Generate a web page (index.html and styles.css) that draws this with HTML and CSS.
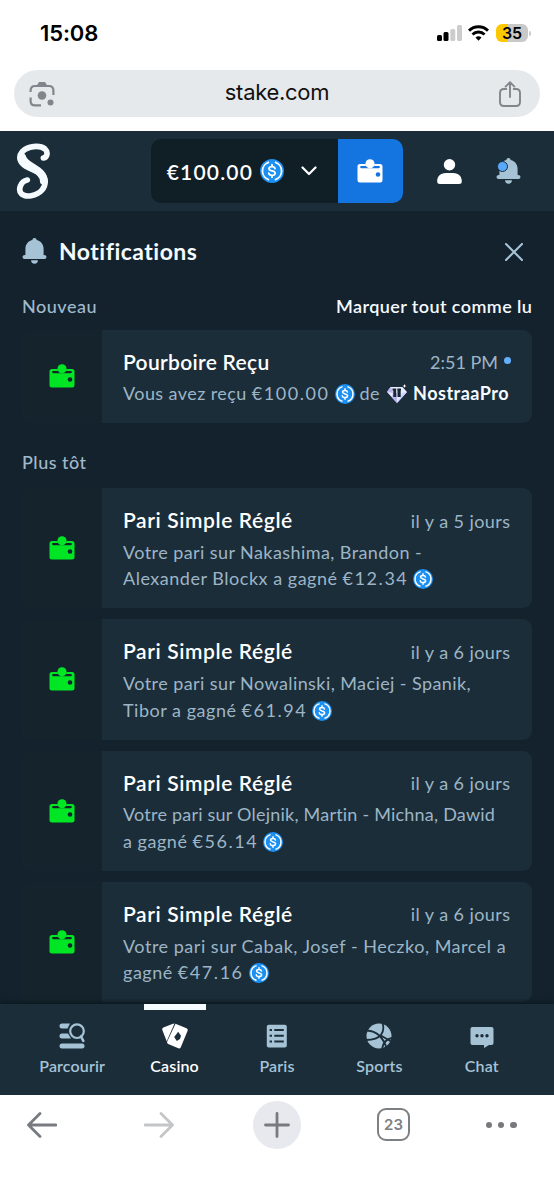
FILE: index.html
```
<!DOCTYPE html>
<html lang="fr">
<head>
<meta charset="utf-8">
<title>Notifications</title>
<link rel="stylesheet" href="styles.css">
</head>
<body>
<svg class="defs" width="0" height="0">
  <symbol id="wallet" viewBox="0 0 26 24">
    <path fill="currentColor" d="M3 5h5.500a4.800 4.800 0 0 0 .7 2H4.200a1 1 0 0 0 0 2.200h17.600a1 1 0 0 0 0-2.200h-5a4.800 4.800 0 0 0 .7-2H23q2.500 0 2.500 2.500V21q0 2.500-2.500 2.500H3Q.5 23.500.5 21V7.500Q.5 5 3 5z"/>
    <circle cx="13" cy="4.800" r="4.600" fill="currentColor"/>
    <circle class="clasp" cx="21" cy="15.500" r="2.300"/>
  </symbol>
  <symbol id="coin" viewBox="0 0 20 20">
    <circle cx="10" cy="10" r="10" fill="#1b8ff2"/>
    <g fill="none" stroke="#fff" stroke-width="1.500">
      <path d="M7.600 2.600a7.700 7.700 0 0 0 0 14.800M12.400 2.600a7.700 7.700 0 0 1 0 14.800"/>
      <path stroke-linecap="round" d="M12.500 8.100C12.300 6.900 11.400 6.400 10 6.400c-1.500 0-2.500.6-2.500 1.700 0 2.600 5.100 1 5.100 3.700 0 1.200-1.100 1.800-2.600 1.800-1.500 0-2.500-.6-2.700-1.800M10 4.800v1.500M10 13.700v1.500"/>
    </g>
  </symbol>
  <symbol id="bell" viewBox="0 0 24 26">
    <path fill="currentColor" d="M12 0a2.200 2.200 0 0 1 2.200 2c4.300 1 6.900 4.500 6.900 9v6l1.800.3a2 2 0 0 1-.4 3.700h-21a2 2 0 0 1-.4-3.700l1.800-.3v-6c0-4.500 2.600-8 6.900-9A2.200 2.200 0 0 1 12 0zM8.600 22.300h6.800a3.400 3.400 0 0 1-6.800 0z"/>
  </symbol>
</svg>

<div class="status">
  <span class="clock">15:08</span>
  <div class="indicators">
    <svg class="signal" viewBox="0 0 26 16"><rect y="10" width="5" height="6" rx="1.500"/><rect x="6.500" y="7" width="5" height="9" rx="1.500"/><g fill="#ccc"><rect x="13.300" y="4" width="5" height="12" rx="1.500"/><rect x="20" width="5" height="16" rx="1.500"/></g></svg>
    <svg class="wifi" viewBox="0 0 21 16"><g fill="none" stroke="#000" stroke-width="2.900"><path d="M1 5.600a13.500 13.500 0 0 1 19 0"/><path d="M4.500 9.500a8.500 8.500 0 0 1 12 0"/></g><path d="M10.500 15.700l-3-3.200a4.500 4.500 0 0 1 6 0z"/></svg>
    <div class="battery">35</div><i class="battery-cap"></i>
  </div>
</div>

<div class="address">
  <svg class="lens" viewBox="0 0 26 26"><g fill="none" stroke="#80868b" stroke-width="2.200"><path d="M1.600 11V9.500Q1.600 5 6 5h14q4.400 0 4.400 4.500V14M1.600 16.500V20q0 4.400 4.400 4.400h6"/></g><path fill="#80868b" d="M7.500 5L10 1h6l2.500 4z"/><circle cx="13" cy="14.500" r="4.300" fill="#80868b"/><circle cx="21.500" cy="21.500" r="3" fill="#80868b"/></svg>
  <span class="url">stake.com</span>
  <svg class="share" viewBox="0 0 22 26"><g fill="none" stroke="#80868b" stroke-width="1.900" stroke-linecap="round" stroke-linejoin="round"><path d="M7.300 8H5Q1 8 1 12v9q0 4 4 4h12q4 0 4-4v-9q0-4-4-4h-2.300M11 16V1.500M6.600 5.600L11 1.200l4.400 4.400"/></g></svg>
</div>

<header class="topbar">
  <svg class="logo" viewBox="45 45 110 168"><g fill="none" stroke="#f5faff" stroke-linecap="round" stroke-linejoin="round"><path stroke-width="17" d="M130 90C142 88 145 72 135 63C119 50 82 54 67 71C53 88 60 103 78 115C94 125 112 129 124 138C140 150 138 172 126 186C110 205 76 209 64 197C53 185 62 160 82 156"/><path stroke-width="23" d="M67 88C70 102 86 110 100 119C116 129 131 139 131 158"/></g></svg>
  <div class="balance">
    <div class="amount"><span>€100.00</span><svg class="coin-lg"><use href="#coin"/></svg><svg class="chev" viewBox="0 0 16 10"><path d="M1.500 1.500L8 8l6.500-6.500" fill="none" stroke="#fff" stroke-width="2.200" stroke-linecap="round" stroke-linejoin="round"/></svg></div>
    <div class="wallet-btn"><svg class="wallet"><use href="#wallet"/></svg></div>
  </div>
  <svg class="user" viewBox="0 0 25 25"><g fill="#fff"><circle cx="12.500" cy="5.800" r="5.700"/><path d="M9 14h7c6 0 9 4 8.800 8.500Q24.800 25 22 25H3Q.2 25 .2 22.500C0 18 3 14 9 14z"/></g></svg>
  <div class="alerts"><svg class="bell"><use href="#bell"/></svg><i class="badge"></i></div>
</header>

<main class="panel">
  <div class="heading">
    <svg class="bell"><use href="#bell"/></svg>
    <h1>Notifications</h1>
    <svg class="close" viewBox="0 0 18 18"><path d="M1 1l16 16M17 1L1 17" stroke="#a6c3d6" stroke-width="2.100" stroke-linecap="round"/></svg>
  </div>
  <div class="section first"><span>Nouveau</span><b class="mark">Marquer tout comme lu</b></div>
  <article class="card short">
    <div class="thumb"><svg class="wallet"><use href="#wallet"/></svg></div>
    <div class="body">
      <div class="row"><h2 class="tip">Pourboire Reçu</h2><time class="clocktime">2:51 PM<i class="unread"></i></time></div>
      <p class="message">Vous avez reçu <span class="sum">€100.00</span> <svg class="coin"><use href="#coin"/></svg> de
        <svg class="gem" viewBox="0 0 20 20"><path fill="#e8ecff" d="M3.500 3h12L20 8l-10 11L0 8z"/><path fill="#b8b5ef" d="M3.500 3L0 8l6 1-1-4zM5 13.500L10 19V9l-4 0z"/><path fill="#c9d6ff" d="M20 8l-5 1-5 10z"/><path fill="#1a2633" d="M5.500 4.500H9.200V13H6.300V6.500h-.8zM10.300 4.500H14v2h-.3V13h-3.200V6.500h-.2z"/><path fill="#fff" d="M17.500 0l.6 1.400 1.400.6-1.400.6-.6 1.400-.6-1.400-1.400-.6 1.400-.6z"/></svg>
        <b>NostraaPro</b></p>
    </div>
  </article>
  <div class="section"><span>Plus tôt</span></div>
  <div class="list">
    <article class="card"><div class="thumb"><svg class="wallet"><use href="#wallet"/></svg></div><div class="body"><div class="row"><h2>Pari Simple Réglé</h2><time>il y a 5 jours</time></div><p>Votre pari sur Nakashima, Brandon -<br><span class="loose">Alexander Blockx a gagné</span> <span class="sum">€12.34</span> <svg class="coin"><use href="#coin"/></svg></p></div></article>
    <article class="card"><div class="thumb"><svg class="wallet"><use href="#wallet"/></svg></div><div class="body"><div class="row"><h2>Pari Simple Réglé</h2><time>il y a 6 jours</time></div><p>Votre pari sur Nowalinski, Maciej - Spanik,<br><span class="loose">Tibor a gagné</span> <span class="sum">€61.94</span> <svg class="coin"><use href="#coin"/></svg></p></div></article>
    <article class="card"><div class="thumb"><svg class="wallet"><use href="#wallet"/></svg></div><div class="body"><div class="row"><h2>Pari Simple Réglé</h2><time>il y a 6 jours</time></div><p><span class="snug">Votre pari sur Olejnik, Martin - Michna, Dawid</span><br><span class="loose">a gagné</span> <span class="sum">€56.14</span> <svg class="coin"><use href="#coin"/></svg></p></div></article>
    <article class="card"><div class="thumb"><svg class="wallet"><use href="#wallet"/></svg></div><div class="body"><div class="row"><h2>Pari Simple Réglé</h2><time>il y a 6 jours</time></div><p><span class="loose">Votre pari sur Cabak, Josef - Heczko, Marcel a</span><br><span class="loose">gagné</span> <span class="sum">€47.16</span> <svg class="coin"><use href="#coin"/></svg></p></div></article>
  </div>
</main>

<nav class="tabs">
  <div class="tab"><svg viewBox="0 0 26 26"><g fill="#a6c3d6"><rect x=".5" y="20.500" width="25" height="5" rx="2.500"/><path d="M3 .5h8L8.500 5.500H3a2.500 2.500 0 0 1 0-5zM3 10.500h6l3 5H3a2.500 2.500 0 0 1 0-5z"/></g><circle cx="18" cy="8.200" r="6.800" fill="#1b2d39" stroke="#a6c3d6" stroke-width="2.200"/><path d="M22 13.500l2.300 4.300" stroke="#a6c3d6" stroke-width="2.600" stroke-linecap="round"/></svg><span>Parcourir</span></div>
  <div class="tab active"><svg viewBox="0 0 26 26"><path fill="#fff" d="M12.500.5L4.700 18.200.3 7Q-.2 5.200 1.400 4.500L11 .7zM13.500.7l11 4.600q1.700.8 1.100 2.500l-6.800 16.400q-.8 1.700-2.500 1.100L6.200 21q-1.600-.8-1-2.500z"/><path fill="#1b2d39" d="M16.200 8.700l2.800 4.100-1 3.200-3.200 2-2.600-4z"/></svg><span>Casino</span></div>
  <div class="tab"><svg viewBox="0 0 26 26"><rect x="2.800" y="1.800" width="20" height="22.600" rx="2" fill="#a6c3d6"/><path d="M5.600 7H8M10.300 7h9.500M5.600 12.800H8M10.300 12.800h9.500M5.600 18.600H8M10.300 18.600h9.500" stroke="#1b2d39" stroke-width="2"/></svg><span>Paris</span></div>
  <div class="tab"><svg viewBox="0 0 26 26"><circle cx="13" cy="13" r="12.500" fill="#a6c3d6"/><g fill="none" stroke="#1b2d39" stroke-width="1.800"><path d="M1 7.500C10 8 17 14 20.500 25M16.500 0C19 8 16 17 0 17M26 15C20 16 17 20 16 26M14 12L26 19"/></g></svg><span>Sports</span></div>
  <div class="tab"><svg viewBox="0 0 26 26"><path fill="#a6c3d6" d="M3.500 4h19q2 0 2 2v14q0 2-2 2H20l-5 3v-3H3.500q-2 0-2-2V6q0-2 2-2z"/><g fill="#1b2d39"><circle cx="8" cy="12.700" r="1.700"/><circle cx="13" cy="12.700" r="1.700"/><circle cx="18" cy="12.700" r="1.700"/></g></svg><span>Chat</span></div>
</nav>

<footer class="browser">
  <svg class="arrow" viewBox="0 0 30 26"><path d="M29 13H1.500M13 1.500L1.500 13 13 24.500" /></svg>
  <svg class="arrow fwd" viewBox="0 0 30 26"><path d="M1 13h27.500M17 1.500L28.500 13 17 24.500"/></svg>
  <div class="plus"><svg viewBox="0 0 26 26"><path d="M13 1.500v23M1.500 13h23"/></svg></div>
  <div class="count">23</div>
  <div class="dots"><i></i><i></i><i></i></div>
</footer>
</body>
</html>
```
FILE: styles.css
```
* { box-sizing: border-box; }
body { margin: 0; width: 554px; height: 1200px; overflow: hidden; display: flex; flex-direction: column; background: #fff; font-family: Lato, "Open Sans", sans-serif; color: #fff; }
svg { display: block; flex: none; }
.defs { position: absolute; }
h1, h2, p { margin: 0; }

.status { height: 70px; flex: none; display: flex; justify-content: space-between; padding: 19px 23px 0 40px; color: #000; font-family: Inter, sans-serif; font-weight: 600; }
.clock { font-size: 22px; line-height: 28px; letter-spacing: -.1px; }
.indicators { display: flex; height: 28px; align-items: center; }
.signal { width: 26px; height: 16px; }
.wifi { width: 21px; height: 16px; margin: 0 7px 0 5px; }
.battery { width: 32px; height: 18px; border-radius: 6px; background: linear-gradient(90deg, #fdc800 36%, #c9c9c9 36%); font-size: 16px; line-height: 18px; text-align: center; }
.battery-cap { width: 2px; height: 5px; margin-left: 1px; border-radius: 0 3px 3px 0; background: #c9c9c9; }

.address { flex: none; height: 47px; margin: 0 14px 14px; padding: 0 19px 0 15px; border-radius: 24px; background: #e6e9ec; display: flex; align-items: center; justify-content: space-between; }
.lens { width: 26px; height: 26px; }
.url { font: 22px/28px Inter, sans-serif; color: #111; letter-spacing: -.3px; margin-bottom: 3px; }
.share { width: 22px; height: 26px; }

.topbar { flex: none; height: 80px; background: #1b2d39; display: flex; align-items: center; padding: 0 33px 0 15px; }
.logo { width: 36.700px; height: 56px; }
.balance { display: flex; width: 252px; height: 64px; margin-left: 99px; border-radius: 10px; overflow: hidden; background: #101e25; }
.amount { width: 187px; padding-left: 16px; display: flex; align-items: center; font-size: 21px; font-weight: 600; }
.amount span { width: 93px; letter-spacing: 1.200px; white-space: nowrap; }
.coin-lg { width: 24px; height: 24px; }
.chev { width: 16px; height: 10px; margin-left: 17px; }
.wallet-btn { width: 65px; background: #1475e1; display: flex; align-items: center; justify-content: center; }
.wallet { width: 26px; height: 24px; }
.wallet-btn .wallet { fill: #1475e1; }
.user { width: 25px; height: 25px; margin-left: 34px; }
.alerts { position: relative; margin-left: 34px; color: #a6c3d6; }
.bell { width: 25px; height: 26px; }
.badge { position: absolute; left: 1px; top: 3px; width: 11px; height: 11px; border-radius: 50%; background: #58a9fb; border: 1.500px solid #1b2d39; }

.panel { flex: none; height: 793px; overflow: hidden; background: #13222c; padding: 0 22px; }
.heading { display: flex; align-items: center; height: 80px; color: #a6c3d6; }
h1 { font-size: 23px; font-weight: 700; letter-spacing: .48px; color: #f5faff; margin-left: 12px; }
.close { width: 18px; height: 18px; margin: 1px 9px 0 auto; }
.section { display: flex; justify-content: space-between; height: 65px; padding-top: 27px; line-height: 24px; font-size: 18px; font-weight: 500; letter-spacing: .5px; color: #a0b9cb; }
.section.first { height: 38.500px; padding-top: 2.500px; }
.mark { font-weight: 600; letter-spacing: .42px; margin-right: -.4px; color: #f5faff; }
.list { display: flex; flex-direction: column; gap: 11px; }
.card { display: flex; flex: none; height: 120.300px; border-radius: 9px; overflow: hidden; background: #1b2d39; }
.card.short { height: 93.500px; }
.thumb { width: 80px; flex: none; background: #15242c; color: #00e625; fill: #15242c; display: flex; align-items: center; justify-content: center; }
.body { flex: 1; padding: 19px 22px 0 21px; }
.row { display: flex; justify-content: space-between; align-items: center; height: 25px; margin-bottom: 6.700px; }
h2 { font-size: 21px; line-height: 25px; font-weight: 600; letter-spacing: .6px; color: #fff; }
.tip { letter-spacing: .3px; }
time { font-size: 18px; line-height: 22px; letter-spacing: .43px; color: #9db5c6; white-space: nowrap; padding-top: 2px; margin-right: -.5px; }
.clocktime { display: flex; gap: 6px; letter-spacing: 0; margin-right: -1px; }
.unread { width: 7px; height: 7px; margin-top: 6px; border-radius: 50%; background: #62b0ff; }
.body p { font-size: 18px; line-height: 26.700px; letter-spacing: .42px; color: #9db5c6; white-space: nowrap; }
.sum { letter-spacing: 1.550px; }
.snug { letter-spacing: .22px; }
.loose { letter-spacing: .52px; }
.coin, .gem { display: inline-block; width: 20px; height: 20px; vertical-align: -4px; }
.gem { margin: 0 1px 0 2px; }
.message b { font-weight: 700; letter-spacing: .5px; color: #f5faff; }

.tabs { flex: none; height: 91px; padding: 0 21px; background: #1b2d39; display: flex; box-shadow: 0 -2px 5px #0c1920; }
.tab { flex: 1; display: flex; flex-direction: column; align-items: center; font-size: 16px; font-weight: 600; letter-spacing: .15px; color: #a6c3d6; }
.tab::before { content: ""; width: 62px; height: 6px; }
.tab.active::before { background: #f5faff; }
.tab.active { color: #fff; }
.tab svg { width: 26px; height: 26px; margin-top: 13px; }
.tab span { line-height: 20px; margin-top: 7px; }

.browser { flex: 1; display: flex; align-items: flex-start; padding: 6px 0 0 27px; background: #fff; }
.arrow { width: 30px; height: 26px; margin-top: 11px; }
.arrow path, .plus path { fill: none; stroke: #777b80; stroke-width: 2.800; stroke-linecap: round; stroke-linejoin: round; }
.fwd { margin-left: 87px; }
.fwd path { stroke: #c4c5c7; }
.plus { width: 48px; height: 48px; margin-left: 79px; border-radius: 50%; background: #e8e9ee; display: flex; align-items: center; justify-content: center; }
.plus svg { width: 26px; height: 26px; }
.count { width: 33px; height: 33px; margin: 7px 0 0 76px; border: 2.500px solid #7c8083; border-radius: 9px; color: #7c8083; font: 600 15px/29px Inter, sans-serif; text-align: center; }
.dots { display: flex; gap: 5.700px; margin: 21px 0 0 76px; }
.dots i { width: 6.400px; height: 6.400px; border-radius: 50%; background: #77797d; }
```
